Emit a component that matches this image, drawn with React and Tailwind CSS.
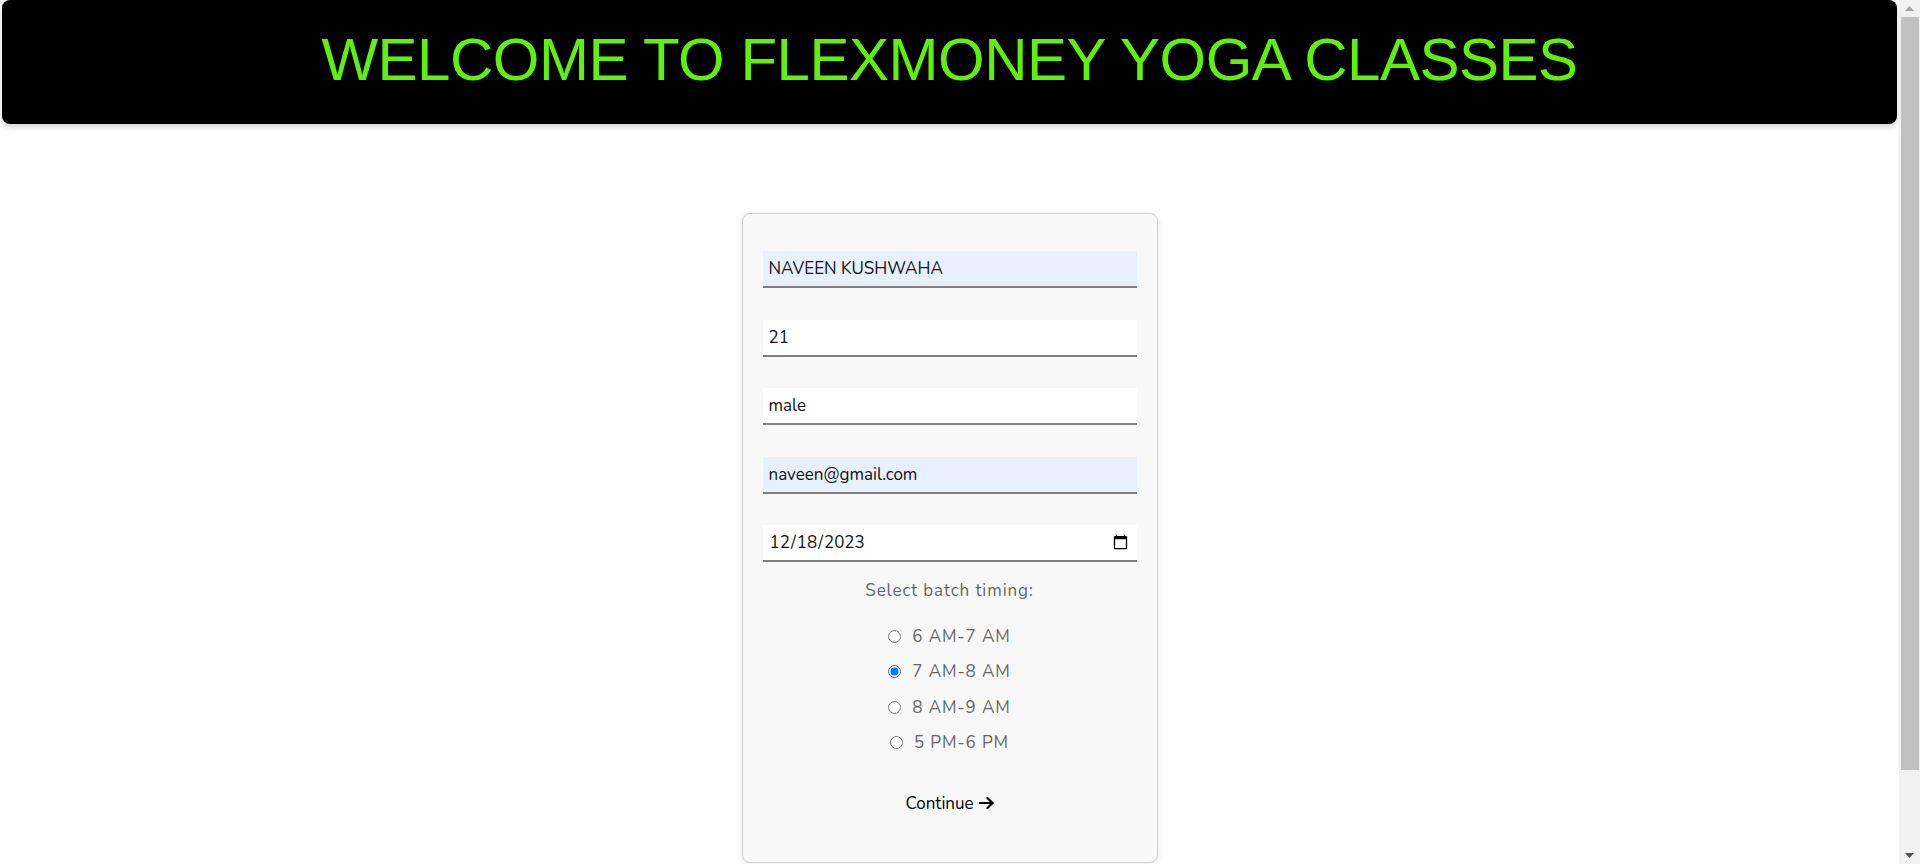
import React from "react";

const bodyFont = "font-['Nunito','Lato','Noto_Sans',sans-serif]";

function Field({ type = "text", value, autofill }) {
  return (
    <input
      type={type}
      defaultValue={value}
      className={`block w-full h-[37px] px-[6px] text-[17px] text-[#111] outline-none border-0 border-b-2 border-[#808080] ${bodyFont} ${
        autofill ? "bg-[#e8f0fe]" : "bg-white"
      }`}
    />
  );
}

function Radio({ label, checked }) {
  return (
    <label className="flex items-center justify-center h-[35.5px] gap-[11px]">
      <input type="radio" name="batch" defaultChecked={checked} className="w-[13px] h-[13px] m-0 accent-[#0075ff]" />
      <span className="text-[17px] tracking-[0.9px] text-[#666]">{label}</span>
    </label>
  );
}

function Scrollbar() {
  return (
    <div className="w-[21px] h-[864px] shrink-0 bg-[#f1f1f1] flex flex-col">
      <div className="h-[17px] flex items-center justify-center">
        <svg width="9" height="5" viewBox="0 0 9 5">
          <path d="M0 5 L4.5 0 L9 5 Z" fill="#a3a3a3" />
        </svg>
      </div>
      <div className="h-[753px] ml-[2px] mr-[1px] bg-[#c1c1c1]" />
      <div className="flex-1" />
      <div className="h-[17px] flex items-center justify-center">
        <svg width="9" height="5" viewBox="0 0 9 5">
          <path d="M0 0 L4.5 5 L9 0 Z" fill="#505050" />
        </svg>
      </div>
    </div>
  );
}

export default function App() {
  return (
    <div className={`flex items-start bg-white ${bodyFont}`}>
      <main className="flex-1 min-w-0 min-h-[950px] px-[2px]">
        <header className="h-[124px] bg-black rounded-[8px] shadow-[0_3px_6px_rgba(0,0,0,0.18)] flex items-center justify-center">
          <h1 className="mb-[4px] text-[60px] leading-none tracking-[-0.5px] text-[#5ef00e] font-['Liberation_Sans',Arial,sans-serif]">
            WELCOME TO FLEXMONEY YOGA CLASSES
          </h1>
        </header>
        <div className="flex justify-center pt-[89px]">
          <form className="w-[416px] h-[650px] bg-[#f8f8f8] border border-[#cfcfcf] rounded-[8px] shadow-[0_2px_8px_rgba(0,0,0,0.08)] px-[20px] pt-[37px]">
            <div className="flex flex-col gap-[31.5px]">
              <Field value="NAVEEN KUSHWAHA" autofill />
              <Field value="21" />
              <Field value="male" />
              <Field value="naveen@gmail.com" autofill />
              <Field type="date" value="2023-12-18" />
            </div>
            <p className="mt-[18.5px] text-center text-[17px] tracking-[0.9px] text-[#666] leading-[20px]">
              Select batch timing:
            </p>
            <div className="mt-[18px] flex flex-col">
              <Radio label="6 AM-7 AM" />
              <Radio label="7 AM-8 AM" checked />
              <Radio label="8 AM-9 AM" />
              <Radio label="5 PM-6 PM" />
            </div>
            <div className="mt-[30px] flex justify-center">
              <button type="button" className="flex items-center gap-[5px] text-[17px] text-black">
                Continue
                <svg width="15" height="12" viewBox="0 0 15 12" fill="none" stroke="currentColor" strokeWidth="2.2" strokeLinecap="round" strokeLinejoin="round">
                  <path d="M1 6h12.5" />
                  <path d="M8.5 1l5 5-5 5" />
                </svg>
              </button>
            </div>
          </form>
        </div>
      </main>
      <Scrollbar />
    </div>
  );
}
